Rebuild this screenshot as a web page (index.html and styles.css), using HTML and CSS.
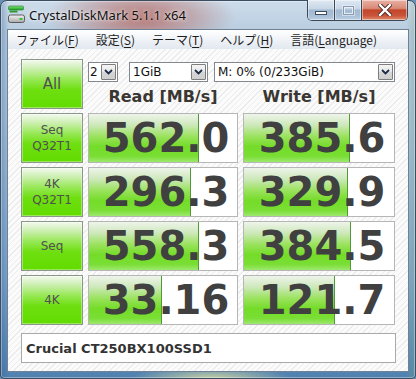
FILE: index.html
```html
<!DOCTYPE html>
<html>
<head>
<meta charset="utf-8">
<title>CrystalDiskMark 5.1.1 x64</title>
<link rel="stylesheet" href="styles.css">
</head>
<body>
<div class="window">
  <div class="titlebar">
    <svg class="appicon" width="17" height="18" viewBox="0 0 17 18">
      <defs>
        <linearGradient id="g1" x1="0" y1="0" x2="0" y2="1">
          <stop offset="0" stop-color="#7ee07a"/>
          <stop offset="1" stop-color="#1e9e22"/>
        </linearGradient>
        <linearGradient id="g2" x1="0" y1="0" x2="0" y2="1">
          <stop offset="0" stop-color="#f4f4f4"/>
          <stop offset="1" stop-color="#a8a8a8"/>
        </linearGradient>
      </defs>
      <rect x="0.5" y="1" width="15" height="4" rx="1" fill="url(#g1)" stroke="#2a7a2a" stroke-width="0.6"/>
      <rect x="1.5" y="5.5" width="8" height="2" fill="#2f9a30"/>
      <rect x="0.5" y="10" width="16" height="7.5" rx="2" fill="url(#g2)" stroke="#5c5c5c" stroke-width="1"/>
      <rect x="11.5" y="13" width="3" height="2" fill="#36c436"/>
    </svg>
    <span class="title">CrystalDiskMark 5.1.1 x64</span>
    <div class="caption">
      <div class="cbtn min"><span class="glyph-min"></span></div>
      <div class="cbtn max"><span class="glyph-max"></span></div>
      <div class="cbtn close">
        <svg width="14" height="12" viewBox="0 0 14 12">
          <path d="M2 1 L12 11 M12 1 L2 11" stroke="#4a2a24" stroke-width="4.2" stroke-linecap="square"/>
          <path d="M2 1 L12 11 M12 1 L2 11" stroke="#ffffff" stroke-width="2.4" stroke-linecap="square"/>
        </svg>
      </div>
    </div>
  </div>
  <div class="client">
    <div class="menubar">
      <span class="menuitem">ファイル(<u>F</u>)</span>
      <span class="menuitem">設定(<u>S</u>)</span>
      <span class="menuitem">テーマ(<u>T</u>)</span>
      <span class="menuitem">ヘルプ(<u>H</u>)</span>
      <span class="menuitem">言語(<u>L</u>anguage)</span>
    </div>
    <div class="content">
      <div class="grid">
        <div class="btn all">All</div>
        <div class="selects">
          <div class="select s1"><span class="seltext">2</span><span class="arrow"><svg width="9" height="6" viewBox="0 0 9 6"><path d="M1 1 L4.5 4.5 L8 1" fill="none" stroke="#1c2a48" stroke-width="1.8"/></svg></span></div>
          <div class="select s2"><span class="seltext">1GiB</span><span class="arrow"><svg width="9" height="6" viewBox="0 0 9 6"><path d="M1 1 L4.5 4.5 L8 1" fill="none" stroke="#1c2a48" stroke-width="1.8"/></svg></span></div>
          <div class="select s3"><span class="seltext">M: 0% (0/233GiB)</span><span class="arrow"><svg width="9" height="6" viewBox="0 0 9 6"><path d="M1 1 L4.5 4.5 L8 1" fill="none" stroke="#1c2a48" stroke-width="1.8"/></svg></span></div>
        </div>
        <div class="hdr hdr-read">Read [MB/s]</div>
        <div class="hdr hdr-write">Write [MB/s]</div>

        <div class="btn label">Seq<br>Q32T1</div>
        <div class="val"><div class="bar" style="width:74.3%"></div><span class="num">562.0</span></div>
        <div class="val"><div class="bar" style="width:70.4%"></div><span class="num">385.6</span></div>

        <div class="btn label">4K<br>Q32T1</div>
        <div class="val"><div class="bar" style="width:68.9%"></div><span class="num">296.3</span></div>
        <div class="val"><div class="bar" style="width:69.1%"></div><span class="num">329.9</span></div>

        <div class="btn label">Seq</div>
        <div class="val"><div class="bar" style="width:74.3%"></div><span class="num">558.3</span></div>
        <div class="val"><div class="bar" style="width:71.0%"></div><span class="num">384.5</span></div>

        <div class="btn label">4K</div>
        <div class="val"><div class="bar" style="width:49.3%"></div><span class="num">33.16</span></div>
        <div class="val"><div class="bar" style="width:60.5%"></div><span class="num">121.7</span></div>
      </div>
      <div class="comment">Crucial CT250BX100SSD1</div>
    </div>
  </div>
</div>
</body>
</html>
```
FILE: styles.css
```css
* { box-sizing: border-box; }
html, body { margin: 0; padding: 0; }
body {
  width: 416px;
  height: 379px;
  overflow: hidden;
  background: #6a8fb4;
  font-family: "DejaVu Sans", sans-serif;
}

.window {
  width: 416px;
  height: 379px;
  border: 1px solid #3a4d61;
  border-radius: 7px 7px 4px 4px;
  padding: 0 6px 6px 6px;
  display: flex;
  flex-direction: column;
  background:
    radial-gradient(ellipse 95px 34px at 140px 16px, rgba(178, 86, 76, 0.75), rgba(178, 86, 76, 0) 100%),
    radial-gradient(ellipse 80px 14px at 210px 378px, rgba(230, 230, 160, 0.8), rgba(230, 230, 160, 0) 100%),
    linear-gradient(to right, rgba(40, 90, 150, 0.35) 0, rgba(40, 90, 150, 0) 8px, rgba(40, 90, 150, 0) 405px, rgba(120, 160, 130, 0.4) 416px),
    linear-gradient(to bottom, #cddcea 0, #b9cde0 30px, #a9c3da 120px, #7ea5c9 280px, #4f80af 379px);
  box-shadow: inset 0 0 0 1px rgba(255, 255, 255, 0.35);
}

.titlebar {
  height: 28px;
  margin: 0 -6px;
  padding: 0 7px;
  display: flex;
  align-items: flex-start;
}
.appicon {
  margin-top: 4px;
  flex: none;
}
.title {
  margin-left: 4px;
  margin-top: 5px;
  font-family: "Noto Sans", sans-serif;
  font-size: 13px;
  line-height: 18px;
  color: #111;
  text-shadow: 0 0 6px rgba(255, 255, 255, 0.9), 0 0 3px rgba(255, 255, 255, 0.7);
  flex: 1;
  white-space: nowrap;
}

.caption {
  display: flex;
  height: 21px;
  margin-top: -1px;
  border: 1px solid #3a4858;
  border-top: none;
  border-radius: 0 0 5px 5px;
  overflow: hidden;
  flex: none;
}
.cbtn {
  width: 26px;
  height: 100%;
  display: flex;
  align-items: center;
  justify-content: center;
  background: linear-gradient(to bottom, #dfe9f3 0%, #c6d5e5 45%, #a3b9d0 50%, #a9c0d7 80%, #bcd0e3 100%);
  box-shadow: inset 0 0 0 1px rgba(255, 255, 255, 0.45);
}
.cbtn + .cbtn { border-left: 1px solid #3a4858; }
.cbtn.max { width: 27px; }
.cbtn.close {
  width: 46px;
  background: linear-gradient(to bottom, #eab0a2 0%, #d98a78 42%, #c24528 50%, #c9543a 78%, #df8c6c 100%);
}
.glyph-min {
  width: 12px;
  height: 4px;
  margin-top: 6px;
  background: #ffffff;
  border: 1px solid #3c4c5e;
}
.glyph-max {
  width: 11px;
  height: 9px;
  border: 1px solid #8a9bb0;
  box-shadow: inset 0 0 0 1px rgba(235, 242, 250, 0.9), 0 0 0 1px rgba(235, 242, 250, 0.6);
  background: transparent;
}

.client {
  height: 343px;
  border: 1px solid #6e8196;
  display: flex;
  flex-direction: column;
  background: #f4f4f4;
}

.menubar {
  height: 19px;
  flex: none;
  display: flex;
  gap: 17px;
  padding-left: 8px;
  align-items: center;
  background: linear-gradient(to bottom, #ffffff 0%, #f1f4f8 45%, #e2e8f0 100%);
  font-family: "Noto Sans CJK JP", sans-serif;
  font-size: 12px;
  line-height: 19px;
  color: #1e1e1e;
}
.menuitem { white-space: nowrap; }
.menuitem u { text-decoration-thickness: 1px; text-underline-offset: 2px; }

.content {
  flex: 1;
  padding: 10px 12px 0 13px;
  background: repeating-linear-gradient(135deg, #fbfbfb 0 3px, #ececec 3px 4px);
}

.grid {
  display: grid;
  grid-template-columns: 62px 150px 152px;
  grid-template-rows: repeat(5, 50px);
  column-gap: 5px;
  row-gap: 4px;
}

.btn {
  border: 1px solid #8b978b;
  background: linear-gradient(to bottom, #f3faee 0%, #cdefb2 18%, #98e858 40%, #6edf10 62%, #62dc00 100%);
  box-shadow: inset 0 0 0 1px rgba(255, 255, 255, 0.35);
  display: flex;
  align-items: center;
  justify-content: center;
  text-align: center;
  color: #505050;
}
.btn.all {
  grid-column: 1;
  grid-row: 1;
  font-size: 15px;
}
.btn.label {
  font-size: 12px;
  line-height: 16px;
}

.selects {
  grid-column: 2 / 4;
  grid-row: 1;
  align-self: start;
  margin-top: 3px;
  display: flex;
}
.select {
  height: 20px;
  border: 1px solid #828790;
  background: #fff;
  display: flex;
  align-items: center;
  justify-content: space-between;
  padding: 1px 1px 1px 3px;
  font-size: 12px;
  color: #111;
}
.select.s1 { width: 30px; padding-left: 1px; }
.select.s2 { width: 79px; margin-left: 11px; }
.select.s3 { width: 181px; margin-left: 6px; }
.seltext { white-space: nowrap; line-height: 16px; }
.arrow {
  width: 15px;
  height: 100%;
  border: 1px solid #7d7d7d;
  border-radius: 1px;
  background: linear-gradient(to bottom, #f4f4f4 0%, #e6e6e6 50%, #d6d6d6 51%, #cfcfcf 100%);
  display: flex;
  align-items: center;
  justify-content: center;
  flex: none;
}

.hdr {
  grid-row: 1;
  align-self: end;
  margin-bottom: 2px;
  text-align: center;
  font-weight: bold;
  font-size: 16px;
  line-height: 20px;
  color: #3a3632;
  white-space: nowrap;
}
.hdr-read { grid-column: 2; }
.hdr-write { grid-column: 3; }

.val {
  position: relative;
  border: 1px solid #b6b6b6;
  background: #fff;
  display: flex;
  align-items: center;
  justify-content: center;
  padding-left: 6px;
  overflow: hidden;
}
.bar {
  position: absolute;
  left: 0;
  top: 0;
  bottom: 0;
  background: linear-gradient(to bottom, #eef4ea 0%, #cfe9bd 22%, #98e25a 48%, #74dc28 68%, #7ade34 88%, #9de86e 100%);
  border-right: 1px solid #4f9a36;
}
.num {
  position: relative;
  font-weight: bold;
  font-size: 40px;
  line-height: 40px;
  color: #404040;
  white-space: nowrap;
}

.comment {
  margin-top: 8px;
  height: 30px;
  border: 1px solid #a9a9a9;
  background: #fff;
  padding-left: 4px;
  display: flex;
  align-items: center;
  font-weight: bold;
  font-size: 13px;
  color: #333;
}
```
